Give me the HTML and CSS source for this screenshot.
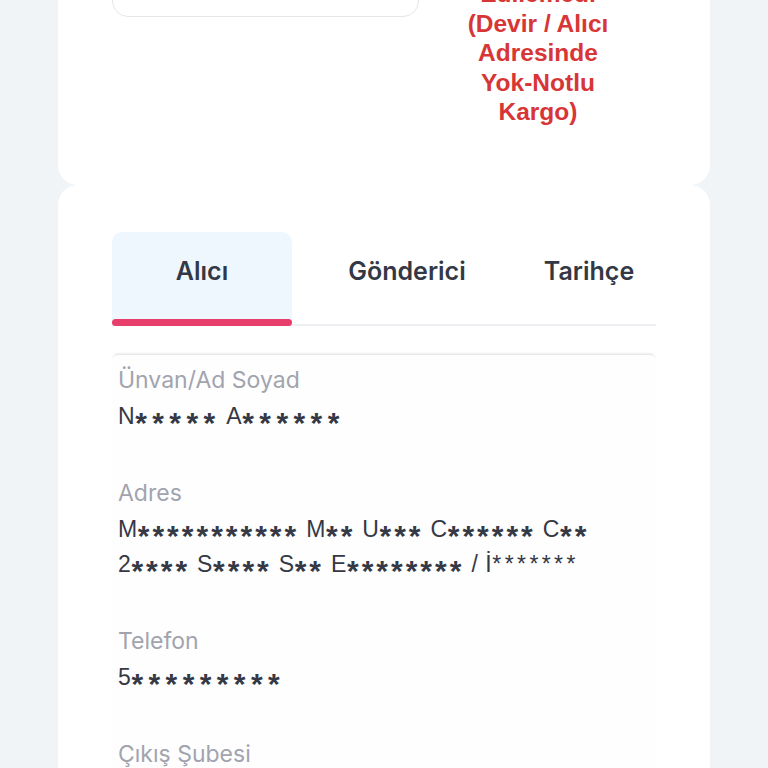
FILE: index.html
```html
<!DOCTYPE html>
<html lang="tr">
<head>
<meta charset="utf-8">
<link rel="stylesheet" href="styles.css">
</head>
<body>
<div class="page">
  <section class="card card-top">
    <div class="top-row">
      <div class="field-box"></div>
      <div class="status">Edilemedi<br>(Devir / Alıcı<br>Adresinde<br>Yok-Notlu<br>Kargo)</div>
    </div>
  </section>
  <section class="card card-detail">
    <div class="tabs">
      <div class="tab tab-active">Alıcı</div>
      <div class="tab tab-mid">Gönderici</div>
      <div class="tab tab-last">Tarihçe</div>
    </div>
    <div class="info">
      <div class="item">
        <div class="label">Ünvan/Ad Soyad</div>
        <div class="value">N<span class="m wide">*****</span> A<span class="m wide">******</span></div>
      </div>
      <div class="item">
        <div class="label">Adres</div>
        <div class="value">M<span class="m">***********</span> M<span class="m">**</span> U<span class="m">***</span> C<span class="m">******</span> C<span class="m">**</span><br>2<span class="m">****</span> S<span class="m">****</span> S<span class="m">**</span> E<span class="m">********</span> / İ<span class="sm">*******</span></div>
      </div>
      <div class="item">
        <div class="label">Telefon</div>
        <div class="value">5<span class="m wide">*********</span></div>
      </div>
      <div class="item">
        <div class="label">Çıkış Şubesi</div>
        <div class="value">&nbsp;</div>
      </div>
    </div>
  </section>
</div>
</body>
</html>
```
FILE: styles.css
```css
html, body {
  margin: 0;
  padding: 0;
  background: #f1f4f7;
  overflow: hidden;
}
.page {
  padding: 0 58px;
  height: 768px;
  overflow: hidden;
  font-family: Inter, "Noto Sans", sans-serif;
}
.card {
  background: #ffffff;
}
.card-top {
  height: 185px;
  border-radius: 0 0 20px 20px;
  padding: 0 54px;
  box-sizing: border-box;
  overflow: hidden;
}
.top-row {
  display: flex;
  align-items: flex-start;
}
.field-box {
  width: 307px;
  height: 60px;
  margin-top: -43px;
  box-sizing: border-box;
  border: 1px solid #e4e6ea;
  border-radius: 16px;
  flex: none;
}
.status {
  width: 180px;
  margin-left: 29px;
  margin-top: -21px;
  text-align: center;
  color: #d83636;
  font-family: "Liberation Sans", Arial, sans-serif;
  font-weight: 700;
  font-size: 24.5px;
  line-height: 29.5px;
}
.card-detail {
  border-radius: 20px 20px 0 0;
  padding: 47px 54px 0;
  height: 583px;
  box-sizing: border-box;
  overflow: hidden;
}
.tabs {
  display: flex;
  border-bottom: 2px solid #eceef1;
}
.tab {
  height: 87px;
  box-sizing: border-box;
  padding-bottom: 10px;
  display: flex;
  align-items: center;
  justify-content: center;
  font-size: 25px;
  font-weight: 600;
  color: #343844;
  margin-bottom: -2px;
}
.tab-active {
  width: 180px;
  background: #eff7fe;
  border-radius: 10px 10px 0 0;
  position: relative;
  height: 94px;
  padding-bottom: 17px;
}
.tab-active::after {
  content: "";
  position: absolute;
  left: 0;
  right: 0;
  bottom: 0;
  height: 7px;
  border-radius: 4px;
  background: #e83e6c;
}
.tab-mid {
  width: 230px;
}
.tab-last {
  width: 134px;
}
.info {
  margin-top: 29px;
  padding: 10px 6px 0;
  background: #fefefe;
  border-radius: 6px;
  box-shadow: 0 -3px 3px -2px rgba(0,0,0,0.14);
}
.item {
  margin-bottom: 44px;
}
.label {
  font-size: 23px;
  line-height: 30px;
  color: #a1a4ae;
}
.value {
  margin-top: 4px;
  font-family: "Liberation Sans", Arial, sans-serif;
  font-size: 23px;
  line-height: 35px;
  color: #353945;
  letter-spacing: 0.6px;
}
.m {
  font-size: 30px;
  font-weight: 700;
  line-height: 0;
  letter-spacing: 3px;
  position: relative;
  top: 9px;
}
.m.wide {
  letter-spacing: 5.4px;
}
.sm {
  letter-spacing: 3.4px;
}
```
